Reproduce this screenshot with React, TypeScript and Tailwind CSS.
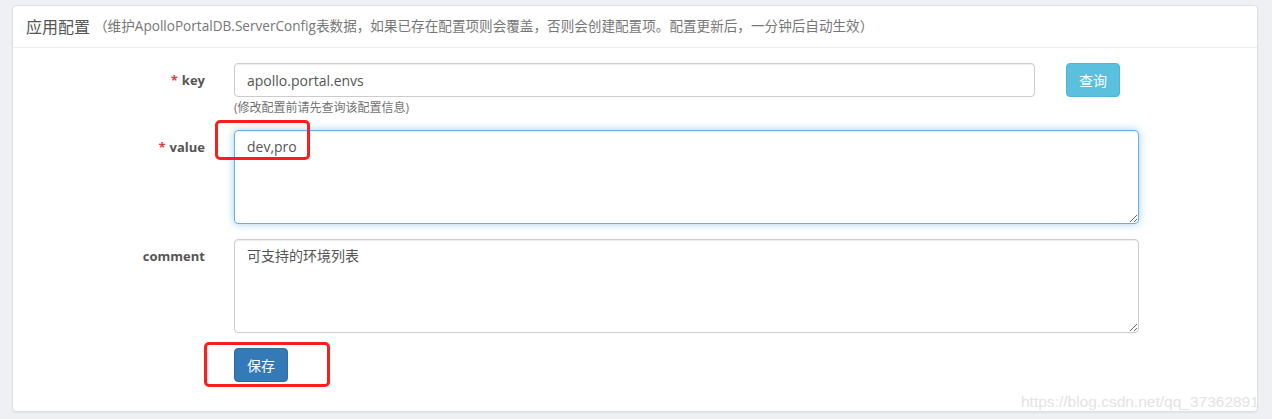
const FONT = "font-['Open_Sans','Noto_Sans_CJK_SC',sans-serif]";

function Label({ text, required }: { text: string; required?: boolean }) {
  return (
    <label className="w-[192px] shrink-0 pt-[8px] text-right text-[13px] font-bold leading-[18px] text-[#555]">
      {required && <span className="mr-[4px] text-[#e4393c]">*</span>}
      {text}
    </label>
  );
}

export default function App() {
  return (
    <div className={`${FONT} relative h-[419px] w-[1272px] overflow-hidden bg-[#eef0f4] pt-[5px] pl-[12px]`}>
      <div className="w-[1246px] rounded-[4px] border border-[#dcdfe4] bg-white shadow-[0_1px_2px_rgba(0,0,0,0.06)]">
        {/* Header */}
        <div className="flex h-[42px] items-center border-b border-[#eeeeee] pl-[13px]">
          <span className="text-[16px] text-[#555]">应用配置</span>
          <span className="ml-[4px] text-[13.6px] text-[#777]">
            （维护ApolloPortalDB.ServerConfig表数据，如果已存在配置项则会覆盖，否则会创建配置项。配置更新后，一分钟后自动生效）
          </span>
        </div>

        {/* Body */}
        <div className="pt-[15px] pb-[29px]">
          {/* key */}
          <div className="flex">
            <Label text="key" required />
            <div className="ml-[29px]">
              <input
                readOnly
                value="apollo.portal.envs"
                className="h-[34px] w-[801px] rounded-[4px] border border-[#ccc] px-[12px] text-[14px] text-[#555] shadow-[inset_0_1px_1px_rgba(0,0,0,0.075)] outline-none"
              />
              <p className="mt-[3px] text-[12px] leading-[16px] text-[#737373]">(修改配置前请先查询该配置信息)</p>
            </div>
            <button className="ml-[31px] h-[34px] w-[54px] rounded-[4px] border border-[#46b8da] bg-[#5bc0de] text-[14px] text-white">
              查询
            </button>
          </div>

          {/* value */}
          <div className="mt-[14px] flex">
            <Label text="value" required />
            <textarea
              readOnly
              value="dev,pro"
              className="ml-[29px] h-[94px] w-[905px] rounded-[4px] border border-[#66afe9] px-[12px] py-[6px] text-[14px] leading-[20px] text-[#555] shadow-[inset_0_1px_1px_rgba(0,0,0,0.075),0_0_8px_rgba(102,175,233,0.6)] outline-none"
            />
          </div>

          {/* comment */}
          <div className="mt-[15px] flex">
            <Label text="comment" />
            <textarea
              readOnly
              value="可支持的环境列表"
              className="ml-[29px] h-[94px] w-[905px] rounded-[4px] border border-[#ccc] px-[12px] py-[6px] text-[14px] leading-[20px] text-[#555] shadow-[inset_0_1px_1px_rgba(0,0,0,0.075)] outline-none"
            />
          </div>

          {/* save */}
          <div className="mt-[15px] flex">
            <div className="w-[192px] shrink-0" />
            <button className="ml-[29px] h-[34px] w-[54px] rounded-[4px] border border-[#2e6da4] bg-[#337ab7] text-[14px] text-white">
              保存
            </button>
          </div>
        </div>
      </div>

      {/* Red annotation boxes */}
      <div className="pointer-events-none absolute left-[215px] top-[120px] h-[40px] w-[95px] rounded-[5px] border-[3px] border-[#ff1c1c]" />
      <div className="pointer-events-none absolute left-[204px] top-[342px] h-[45px] w-[126px] rounded-[5px] border-[3px] border-[#ff1c1c]" />

      {/* Watermark */}
      <div className="pointer-events-none absolute left-[1021px] top-[390px] font-['Liberation_Sans',sans-serif] text-[15.5px] text-[#e3e3e3]">
        https://blog.csdn.net/qq_37362891
      </div>
    </div>
  );
}
